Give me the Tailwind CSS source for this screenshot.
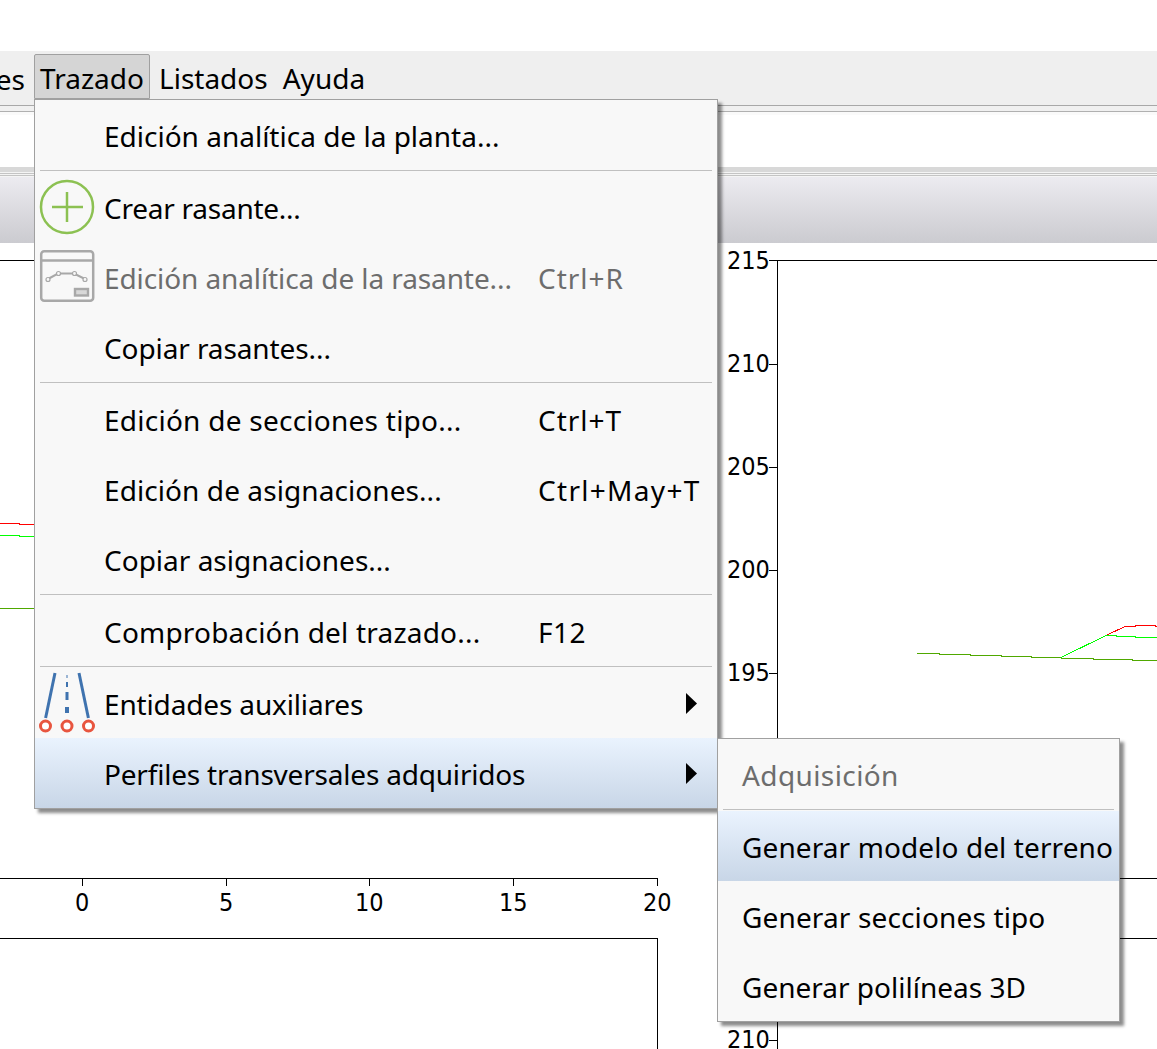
<!DOCTYPE html>
<html lang="es">
<head>
<meta charset="UTF-8">
<title>Trazado</title>
<script src="https://cdn.jsdelivr.net/npm/@tailwindcss/browser@4"></script>
</head>
<body class="bg-white">
<div class="relative w-[1157px] h-[1049px] overflow-hidden bg-white font-['Noto_Sans',sans-serif] text-[28px] text-black">

  <!-- window chrome -->
  <div class="h-[51px] bg-white"></div>
  <div class="flex h-[54px] bg-[#efefef]">
    <div class="w-[34px] h-[54px] overflow-hidden flex justify-end items-center mt-[1px]"><span class="pr-[9px]">es</span></div>
    <button class="w-[116px] h-[45px] mt-[3px] bg-[#d5d5d5] border border-[#a0a0a0] rounded-t-[2px] text-left pl-[5px] pt-[2px] leading-[42px]">Trazado</button>
    <div class="ml-[9px] leading-[54px]">Listados</div>
    <div class="ml-[15px] leading-[54px]">Ayuda</div>
  </div>
  <div class="h-[1px] bg-[#a8a8a8]"></div>
  <div class="h-[5px] bg-[#f0f0f0]"></div>
  <div class="h-[1px] bg-[#b0b0b0]"></div>
  <div class="h-[3px] bg-[#fafafa]"></div>
  <div class="h-[52px] bg-white"></div>
  <div class="h-[5px] bg-[#d8d8d8]"></div>
  <div class="h-[1px] bg-[#f4f4f4]"></div>
  <div class="h-[1px] bg-[#c4c4c4]"></div>
  <div class="h-[1px] bg-[#f4f4f4]"></div>
  <div class="h-[1px] bg-[#c4c4c4]"></div>
  <div class="h-[1px] bg-[#f4f4f4]"></div>
  <div class="h-[66px] bg-gradient-to-b from-[#ecebf0] to-[#cbcbd0]"></div>

  <!-- plots -->
  <svg class="absolute left-0 top-0" width="1157" height="1049" shape-rendering="crispEdges" fill="none">
    <g stroke="#000" stroke-width="1">
      <path d="M0 260.5H35"/>
      <path d="M0 878.5H657.5V886"/>
      <path d="M0 938.5H657.5V1049"/>
      <path d="M82.5 878V886M226.5 878V886M369.5 878V886M513.5 878V886"/>
      <path d="M769 260.5H1157M777.5 260V878H1157"/>
      <path d="M769 364.5H777M769 467.5H777M769 570.5H777M769 673.5H777"/>
      <path d="M777.5 938V1049H777M777 938.5H1157M769 1040.5H777"/>
    </g>
    <g stroke-width="1">
      <path stroke="#ff0000" d="M0 523.5H19V524.5H34"/>
      <path stroke="#00ff00" d="M0 535.5H19V536.5H34"/>
      <path stroke="#4fa800" d="M0 608.5H34"/>
      <path stroke="#4fa800" d="M917 653.5H939V654.5H970V655.5H1001V656.5H1031V657.5H1061V658.5H1093V659.5H1132V660.5H1157"/>
      <path stroke="#00ff00" d="M1061 657.5L1106 635.5H1116V636.5H1135V637.5H1157"/>
      <path stroke="#ff0000" d="M1107 635L1125 626.5H1135V625.5H1155V626.5H1157"/>
    </g>
  </svg>
  <div class="absolute left-[727px] top-[246px] font-['DejaVu_Sans_Condensed',sans-serif] text-[25px] leading-[30px]">215</div>
  <div class="absolute left-[727px] top-[349px] font-['DejaVu_Sans_Condensed',sans-serif] text-[25px] leading-[30px]">210</div>
  <div class="absolute left-[727px] top-[452px] font-['DejaVu_Sans_Condensed',sans-serif] text-[25px] leading-[30px]">205</div>
  <div class="absolute left-[727px] top-[555px] font-['DejaVu_Sans_Condensed',sans-serif] text-[25px] leading-[30px]">200</div>
  <div class="absolute left-[727px] top-[658px] font-['DejaVu_Sans_Condensed',sans-serif] text-[25px] leading-[30px]">195</div>
  <div class="absolute left-[727px] top-[1025px] font-['DejaVu_Sans_Condensed',sans-serif] text-[25px] leading-[30px]">210</div>
  <div class="absolute left-[75px] top-[888px] font-['DejaVu_Sans_Condensed',sans-serif] text-[25px] leading-[30px]">0</div>
  <div class="absolute left-[219px] top-[888px] font-['DejaVu_Sans_Condensed',sans-serif] text-[25px] leading-[30px]">5</div>
  <div class="absolute left-[355px] top-[888px] font-['DejaVu_Sans_Condensed',sans-serif] text-[25px] leading-[30px]">10</div>
  <div class="absolute left-[499px] top-[888px] font-['DejaVu_Sans_Condensed',sans-serif] text-[25px] leading-[30px]">15</div>
  <div class="absolute left-[643px] top-[888px] font-['DejaVu_Sans_Condensed',sans-serif] text-[25px] leading-[30px]">20</div>

  <!-- Trazado menu -->
  <div class="absolute left-[34px] top-[99px] w-[684px] h-[710px] bg-[#f8f8f8] border border-[#a0a0a0] shadow-[4px_4px_3px_rgba(0,0,0,0.45)]">
    <div class="flex items-center h-[70px]"><div class="w-[69px]"></div><span class="w-[434px] pt-[2px]">Edición analítica de la planta...</span></div>
    <div class="h-[2px] mx-[5px]"><div class="h-[1px] bg-[#c0c0c0]"></div></div>

    <div class="flex items-center h-[70px]">
      <div class="w-[69px] h-[70px]">
        <svg width="69" height="70" fill="none">
          <circle cx="32" cy="35" r="26" stroke="#8cc152" stroke-width="2.5"/>
          <path d="M32 20V50M17 35H48" stroke="#8cc152" stroke-width="2.5"/>
        </svg>
      </div>
      <span class="w-[434px] pt-[2px] tracking-[-0.25px]">Crear rasante...</span>
    </div>
    <div class="flex items-center h-[70px] text-[#6d6d6d]">
      <div class="w-[69px] h-[70px]">
        <svg width="69" height="70" fill="none">
          <rect x="6.2" y="9.2" width="52" height="49.6" rx="3" stroke="#a8a8a8" stroke-width="2.5"/>
          <path d="M6 18.5H58" stroke="#a8a8a8" stroke-width="2.5"/>
          <path d="M13 37L23 31.5H39L50 37" stroke="#a8a8a8" stroke-width="2"/>
          <circle cx="13" cy="37.5" r="2" fill="#f8f8f8" stroke="#a8a8a8" stroke-width="1.2"/>
          <circle cx="23.5" cy="31.5" r="2" fill="#f8f8f8" stroke="#a8a8a8" stroke-width="1.2"/>
          <circle cx="39.5" cy="31.5" r="2" fill="#f8f8f8" stroke="#a8a8a8" stroke-width="1.2"/>
          <circle cx="50" cy="37.5" r="2" fill="#f8f8f8" stroke="#a8a8a8" stroke-width="1.2"/>
          <rect x="40" y="47" width="13" height="6.5" fill="#d8d8d8" stroke="#a8a8a8" stroke-width="2.4"/>
        </svg>
      </div>
      <span class="w-[434px] pt-[2px] tracking-[-0.1px]">Edición analítica de la rasante...</span><span class="pt-[2px] tracking-[1px]">Ctrl+R</span>
    </div>
    <div class="flex items-center h-[70px]"><div class="w-[69px]"></div><span class="w-[434px] pt-[2px] tracking-[-0.1px]">Copiar rasantes...</span></div>
    <div class="h-[2px] mx-[5px]"><div class="h-[1px] bg-[#c0c0c0]"></div></div>

    <div class="flex items-center h-[70px]"><div class="w-[69px]"></div><span class="w-[434px] pt-[2px] tracking-[0.25px]">Edición de secciones tipo...</span><span class="pt-[2px] tracking-[1px]">Ctrl+T</span></div>
    <div class="flex items-center h-[70px]"><div class="w-[69px]"></div><span class="w-[434px] pt-[2px] tracking-[0.08px]">Edición de asignaciones...</span><span class="pt-[2px] tracking-[1.3px]">Ctrl+May+T</span></div>
    <div class="flex items-center h-[70px]"><div class="w-[69px]"></div><span class="w-[434px] pt-[2px]">Copiar asignaciones...</span></div>
    <div class="h-[2px] mx-[5px]"><div class="h-[1px] bg-[#c0c0c0]"></div></div>

    <div class="flex items-center h-[70px]"><div class="w-[69px]"></div><span class="w-[434px] pt-[2px] tracking-[0.2px]">Comprobación del trazado...</span><span class="pt-[2px] tracking-[0.5px]">F12</span></div>
    <div class="h-[2px] mx-[5px]"><div class="h-[1px] bg-[#c0c0c0]"></div></div>

    <div class="flex items-center h-[70px]">
      <div class="w-[69px] h-[70px]">
        <svg width="69" height="70" fill="none">
          <path d="M20 5L10.6 50" stroke="#3f73af" stroke-width="3"/>
          <path d="M44 5L53.4 50" stroke="#3f73af" stroke-width="3"/>
          <path d="M31.5 7H32.5V10H31.5ZM31 14H33V19H31ZM30.5 24H33.5V32H30.5ZM30 39H34V45H30Z" fill="#3f73af"/>
          <circle cx="10.5" cy="58" r="5" stroke="#e8553f" stroke-width="3" fill="#fff"/>
          <circle cx="32" cy="58" r="5" stroke="#e8553f" stroke-width="3" fill="#fff"/>
          <circle cx="53.5" cy="58" r="5" stroke="#e8553f" stroke-width="3" fill="#fff"/>
        </svg>
      </div>
      <span class="w-[434px] pt-[2px] tracking-[-0.15px]">Entidades auxiliares</span>
      <svg class="ml-[148px]" width="11" height="21"><path d="M0 0L11 10.5L0 21Z" fill="#000"/></svg>
    </div>
    <div class="flex items-center h-[70px] bg-gradient-to-b from-[#eaf3fe] to-[#c8d6e7]">
      <div class="w-[69px]"></div>
      <span class="w-[434px] pt-[2px] tracking-[-0.2px]">Perfiles transversales adquiridos</span>
      <svg class="ml-[148px]" width="11" height="21"><path d="M0 0L11 10.5L0 21Z" fill="#000"/></svg>
    </div>
  </div>

  <!-- submenu -->
  <div class="absolute left-[717px] top-[738px] w-[403px] h-[284px] bg-[#f8f8f8] border border-[#a0a0a0] shadow-[4px_4px_3px_rgba(0,0,0,0.45)]">
    <div class="flex items-center h-[70px] pl-[24px] pt-[2px] tracking-[0.4px] text-[#6d6d6d]">Adquisición</div>
    <div class="h-[2px] mx-[5px]"><div class="h-[1px] bg-[#c0c0c0]"></div></div>
    <div class="flex items-center h-[70px] pl-[24px] pt-[2px] tracking-[0.1px] bg-gradient-to-b from-[#eaf3fe] to-[#c8d6e7]">Generar modelo del terreno</div>
    <div class="flex items-center h-[70px] pl-[24px] pt-[2px] tracking-[0.14px]">Generar secciones tipo</div>
    <div class="flex items-center h-[70px] pl-[24px] pt-[2px]">Generar polilíneas 3D</div>
  </div>
</div>
</body>
</html>
